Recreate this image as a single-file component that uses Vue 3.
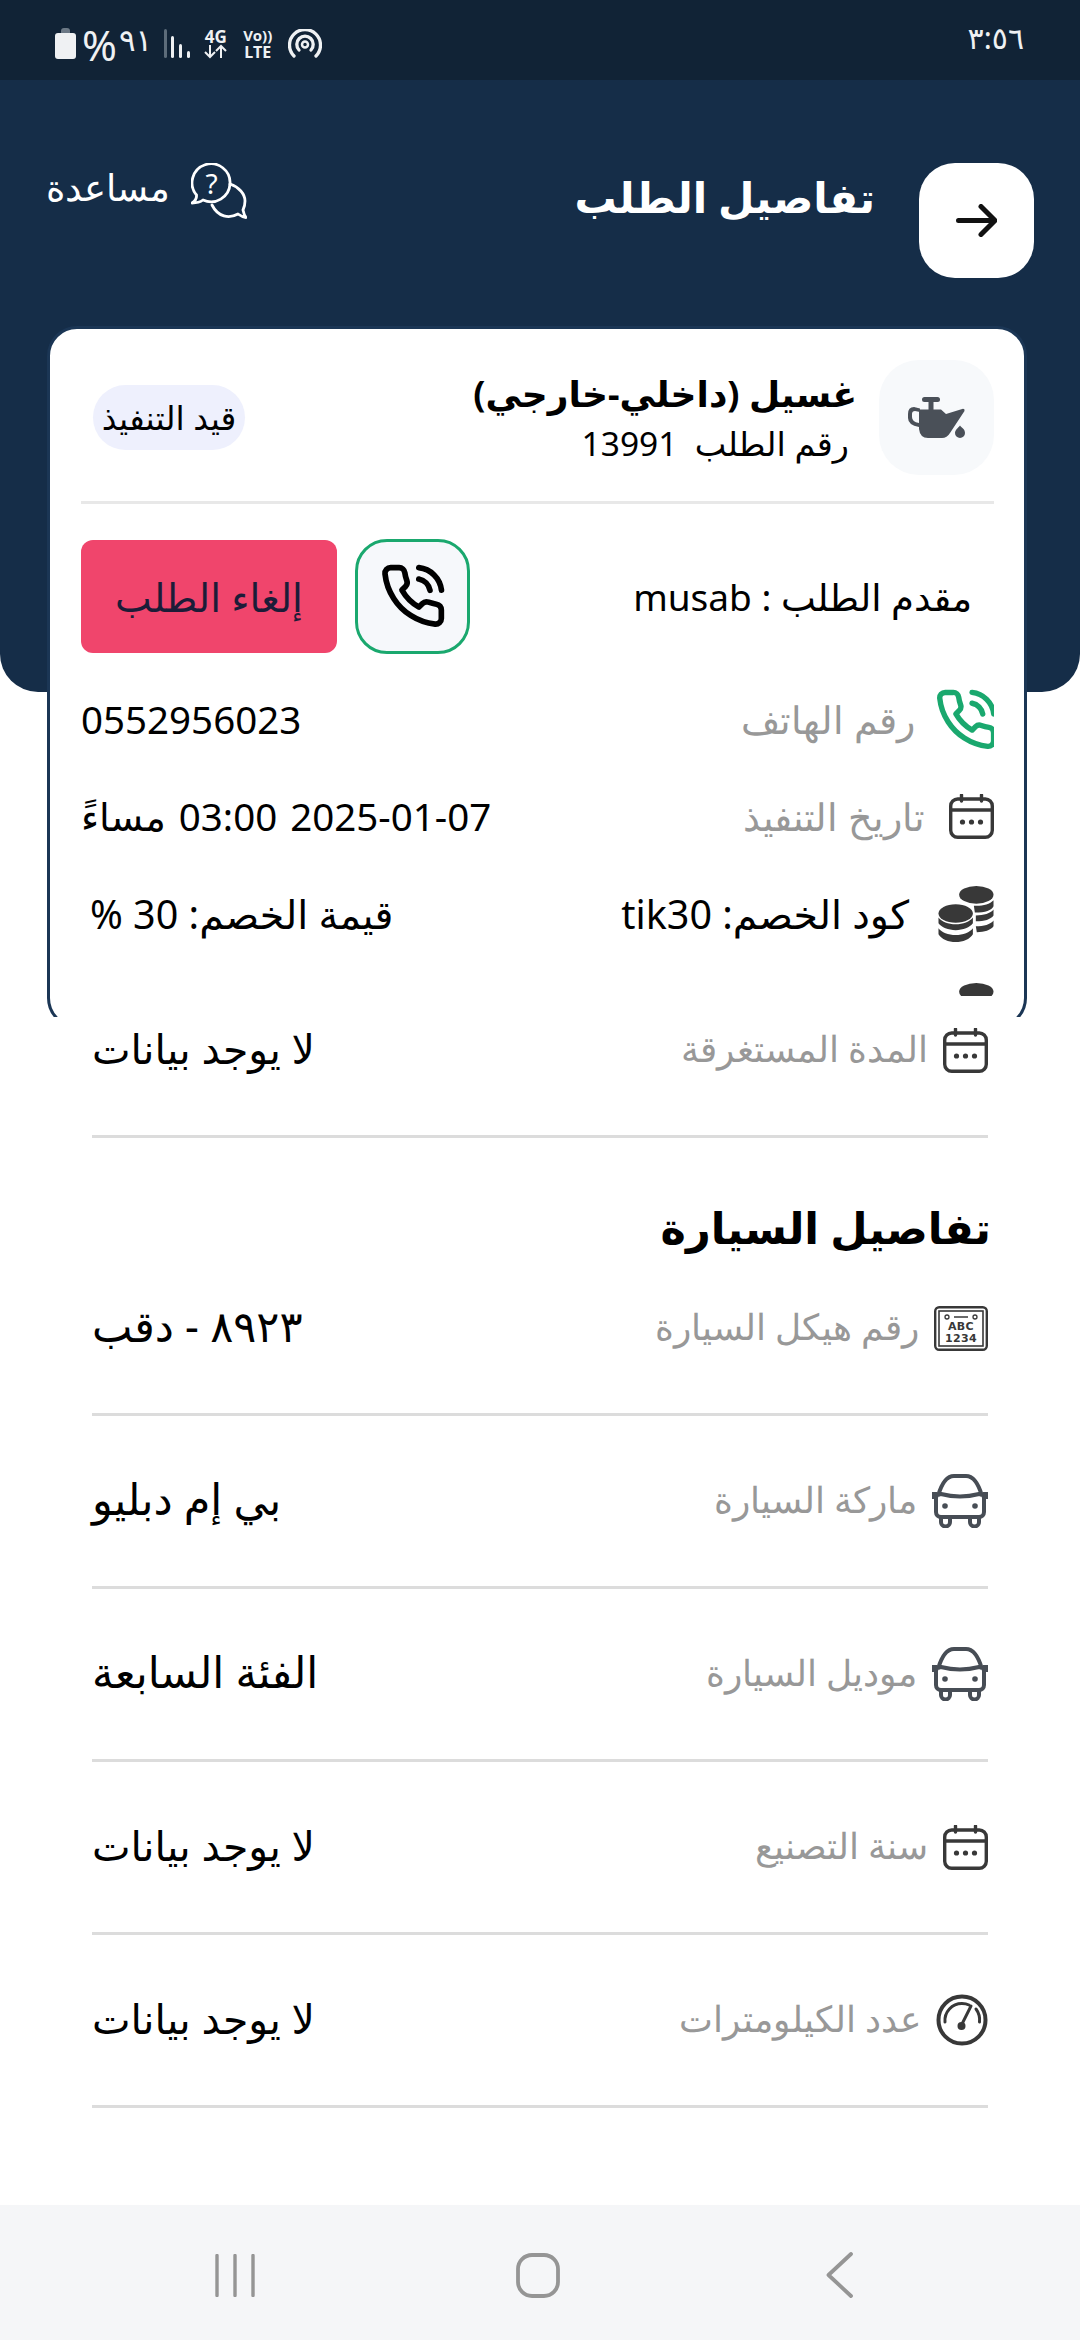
<script setup>
const cardRows = [
  { id: 'phone', icon: 'phone', label: 'رقم الهاتف', value: '0552956023' },
  { id: 'date', icon: 'cal', label: 'تاريخ التنفيذ', value: '2025-01-07 03:00 مساءً' }
]
const carRows = [
  { id: 'brand', icon: 'car', label: 'ماركة السيارة', value: 'بي إم دبليو', big: true },
  { id: 'model', icon: 'car', label: 'موديل السيارة', value: 'الفئة السابعة', big: true },
  { id: 'year', icon: 'cal', label: 'سنة التصنيع', value: 'لا يوجد بيانات' },
  { id: 'km', icon: 'gauge', label: 'عدد الكيلومترات', value: 'لا يوجد بيانات' }
]
</script>

<template>
  <div class="page" dir="rtl">
    <svg width="0" height="0" class="defs">
      <defs>
        <symbol id="i-phone" viewBox="0 0 24 24">
          <path fill="none" stroke="currentColor" stroke-width="2" stroke-linecap="round" stroke-linejoin="round" d="M22 16.92v3a2 2 0 0 1-2.18 2 19.79 19.79 0 0 1-8.63-3.07 19.5 19.5 0 0 1-6-6 19.79 19.79 0 0 1-3.07-8.67A2 2 0 0 1 4.11 2h3a2 2 0 0 1 2 1.72 12.84 12.84 0 0 0 .7 2.81 2 2 0 0 1-.45 2.11L8.09 9.91a16 16 0 0 0 6 6l1.27-1.27a2 2 0 0 1 2.11-.45 12.84 12.84 0 0 0 2.81.7A2 2 0 0 1 22 16.92z M14.05 2a9 9 0 0 1 8 7.94 M14.05 6A5 5 0 0 1 18 10"/>
        </symbol>
        <symbol id="i-cal" viewBox="0 0 45 45">
          <rect x="1.7" y="5" width="41.6" height="38.3" rx="7" fill="none" stroke="#383838" stroke-width="3.4"/>
          <path d="M2 16h41" stroke="#383838" stroke-width="3.4"/>
          <path d="M12.5 1v6M32.5 1v6" stroke="#383838" stroke-width="3.4" stroke-linecap="round"/>
          <circle cx="13.5" cy="28" r="2.6" fill="#383838"/><circle cx="22.5" cy="28" r="2.6" fill="#383838"/><circle cx="31.5" cy="28" r="2.6" fill="#383838"/>
        </symbol>
        <symbol id="i-coins" viewBox="0 0 56 57">
          <g fill="#383838">
            <ellipse cx="38.500" cy="9" rx="17.500" ry="9"/>
            <path d="M36 20c8 .5 16-1 20-5.500v6c-2 4-8 6.500-19 6.500z"/>
            <path d="M38 30c8 0 15-2 18-6v6c-3 4-9 6-18 6z"/>
            <path d="M38 41c8 0 15-2 18-6v6c-3 4-9 6-17 6z"/>
            <ellipse cx="17.500" cy="28" rx="17.500" ry="9.500"/>
            <path d="M0 32c3 4 10 7 17.500 7s14.500-3 17.500-7v6c-3 4-10 7-17.500 7S3 42 0 38z"/>
            <path d="M0 43c3 4 10 7 17.500 7s14.500-3 17.500-7v6c-3 5-10 8-17.500 8S3 54 0 49z"/>
          </g>
        </symbol>
        <symbol id="i-car" viewBox="0 0 56 54">
          <g fill="none" stroke="#474d55" stroke-width="4" stroke-linejoin="round">
            <path d="M6 22 C10 8 15 2 22 2 h12 c7 0 12 6 16 20"/>
            <path d="M4 24 c0-2 2-4 5-4 q19 5 38 0 c3 0 5 2 5 4 v14 c0 3-2 5-5 5 H9 c-3 0-5-2-5-5z"/>
            <path d="M9 44 v4 a4.500 4.500 0 0 0 9 0 v-4 M38 44 v4 a4.500 4.500 0 0 0 9 0 v-4"/>
          </g>
          <path d="M0 18h5v7H0zM51 18h5v7h-5z" fill="#474d55"/>
          <circle cx="13" cy="32" r="2.800" fill="#474d55"/><circle cx="43" cy="32" r="2.800" fill="#474d55"/>
        </symbol>
        <symbol id="i-gauge" viewBox="0 0 52 52">
          <circle cx="26" cy="26" r="23.500" fill="none" stroke="#383838" stroke-width="4"/>
          <path d="M9 28 A17 17 0 0 1 26 9.500 c3 0 5 .5 7 1.500 M40 15 c3 4 4 8 3.500 13" fill="none" stroke="#383838" stroke-width="3" stroke-linecap="round"/>
          <path d="M26 30 L35 12" stroke="#383838" stroke-width="3" stroke-linecap="round"/>
          <circle cx="25.500" cy="32" r="4" fill="#383838"/>
        </symbol>
      </defs>
    </svg>

    <header class="status">
      <span class="time">٣:٥٦</span>
      <div class="status-left" dir="ltr">
        <svg class="battery" width="21" height="31" viewBox="0 0 21 31">
          <path d="M6 3q0-3 3-3h3q3 0 3 3v2H6z" fill="#6c7986"/>
          <rect x="0" y="5" width="21" height="26" rx="3" fill="#eff1f3"/>
        </svg>
        <span class="pct">%</span>
        <span class="pct-num">٩١</span>
        <svg class="bars" width="26" height="30" viewBox="0 0 26 30">
          <rect x="0" y="0" width="3" height="29" rx="1.500" fill="#5d6c7a"/>
          <rect x="7" y="7" width="3" height="22" rx="1.500" fill="#eff1f3"/>
          <rect x="15" y="15" width="3" height="14" rx="1.500" fill="#eff1f3"/>
          <rect x="23" y="22" width="3" height="7" rx="1.500" fill="#eff1f3"/>
        </svg>
        <div class="net net-4g">
          <span>4G</span>
          <svg width="25" height="15" viewBox="0 0 25 15"><path d="M7 1v12M2 8l5 5 5-5M18 14V2M13 7l5-5 5 5" fill="none" stroke="#eff1f3" stroke-width="2"/></svg>
        </div>
        <div class="net net-volte"><span>Vo))</span><span>LTE</span></div>
        <svg class="hotspot" width="34" height="29" viewBox="0 0 34 29">
          <g fill="none" stroke="#eff1f3" stroke-width="3.300" stroke-linecap="round">
            <path d="M6 27A15.500 15.500 0 1 1 28 27"/>
            <path d="M11 21A8.200 8.200 0 1 1 23 21"/>
          </g>
          <circle cx="17" cy="15.500" r="3" fill="none" stroke="#eff1f3" stroke-width="2.500"/>
        </svg>
      </div>
    </header>

    <section class="hero">
      <button class="back" type="button" aria-label="رجوع">
        <svg width="41" height="33" viewBox="0 0 41 33"><path d="M2.500 16.500H38M25 2.500l14 14-14 14" fill="none" stroke="#111" stroke-width="5" stroke-linecap="round" stroke-linejoin="round"/></svg>
      </button>
      <h1 class="title">تفاصيل الطلب</h1>
      <div class="help">
        <svg width="56" height="56" viewBox="0 0 56 56">
          <g fill="none" stroke="#fff" stroke-width="2.800" stroke-linejoin="round" stroke-linecap="round">
            <path d="M5.500 32 Q6 37 1 40 Q8 40 12 37 A19 19 0 1 0 5.500 32Z"/>
            <path d="M39 21 C48 24 54 31 54 38 C54 42 53 45 52 47 Q53 52 55 54.500 Q51 54 47 51 C38 56 27 54 21 42"/>
          </g>
          <text x="20.500" y="31" class="help-q">?</text>
        </svg>
        <span class="help-text">مساعدة</span>
      </div>
    </section>

    <div class="card-clip">
      <article class="card">
        <div class="card-head">
          <div class="tile">
            <svg width="57" height="41" viewBox="0 0 57 41">
              <g fill="#4a5058">
                <rect x="14" y="0" width="18" height="5" rx="2.500"/>
                <rect x="20.500" y="4" width="5" height="10"/>
                <path d="M11 12.500 H33 L38 17 L55 11.800 Q57 11.800 56.500 14 L42 36 Q39 41 34 41 H20 Q12 41 11 32z"/>
                <path fill-rule="evenodd" d="M12 11.500 L6 10 Q0 10 0 17 V21 Q0 28 11 30 V26 Q4 25 4 20 V17 Q4 14 7 14 L12 15z"/>
                <path d="M52 28.500 C54 31 57 32 57 36 a5 5 0 0 1-10 0 c0-3 3-5 5-7.500z"/>
              </g>
            </svg>
          </div>
          <div class="head-text">
            <div class="svc">غسيل (داخلي-خارجي)</div>
            <div class="order">رقم الطلب&nbsp; 13991</div>
          </div>
          <span class="badge">قيد التنفيذ</span>
        </div>
        <div class="rule"></div>
        <div class="sender-row">
          <span class="sender">مقدم الطلب : musab</span>
          <div class="actions">
            <button class="call" type="button" aria-label="اتصال">
              <svg width="68" height="68" class="ico-black"><use href="#i-phone"/></svg>
            </button>
            <button class="cancel" type="button">إلغاء الطلب</button>
          </div>
        </div>
        <div class="list">
          <div v-for="r in cardRows" :key="r.id" class="c-row">
            <div class="lab">
              <svg v-if="r.icon === 'phone'" class="ico-tel ico-green"><use href="#i-phone"/></svg>
              <svg v-else class="ico-45"><use href="#i-cal"/></svg>
              <span class="muted">{{ r.label }}</span>
            </div>
            <span class="val-en">{{ r.value }}</span>
          </div>
          <div class="c-row">
            <div class="lab lab-wide">
              <svg class="ico-56"><use href="#i-coins"/></svg>
              <span class="val-mid">كود الخصم: tik30</span>
            </div>
            <span class="val-mid discount">قيمة الخصم: 30 %</span>
          </div>
          <div class="c-row">
            <div class="lab"><svg class="ico-56"><use href="#i-coins"/></svg></div>
          </div>
        </div>
      </article>
    </div>

    <main class="details">
      <div class="d-row first">
        <div class="lab">
          <svg class="ico-45"><use href="#i-cal"/></svg>
          <span class="muted">المدة المستغرقة</span>
        </div>
        <span class="val">لا يوجد بيانات</span>
      </div>
      <h2 class="car-title">تفاصيل السيارة</h2>
      <div class="d-row">
        <div class="lab">
          <svg class="ico-plate" viewBox="0 0 54 45">
            <rect x="1.200" y="1.200" width="51.600" height="42.600" rx="4" fill="none" stroke="#383838" stroke-width="2.400"/>
            <rect x="5" y="5" width="44" height="35" fill="none" stroke="#383838" stroke-width="1.600"/>
            <circle cx="13" cy="11" r="2" fill="none" stroke="#383838" stroke-width="1.300"/>
            <circle cx="41" cy="11" r="2" fill="none" stroke="#383838" stroke-width="1.300"/>
            <path d="M20 11h14" stroke="#383838" stroke-width="1.500"/>
            <text x="27" y="24" class="plate-t">ABC</text>
            <text x="27" y="36" class="plate-t">1234</text>
          </svg>
          <span class="muted">رقم هيكل السيارة</span>
        </div>
        <span class="val big">٨٩٢٣ - دقب</span>
      </div>
      <div v-for="r in carRows" :key="r.id" class="d-row">
        <div class="lab">
          <svg v-if="r.icon === 'car'" class="ico-car"><use href="#i-car"/></svg>
          <svg v-else-if="r.icon === 'cal'" class="ico-45"><use href="#i-cal"/></svg>
          <svg v-else class="ico-gauge"><use href="#i-gauge"/></svg>
          <span class="muted">{{ r.label }}</span>
        </div>
        <span class="val" :class="{ big: r.big }">{{ r.value }}</span>
      </div>
    </main>

    <nav class="navbar" dir="ltr">
      <svg width="40" height="43" viewBox="0 0 40 43"><path d="M2 1.500v40M20 1.500v40M38 1.500v40" stroke="#959595" stroke-width="3.400" stroke-linecap="round"/></svg>
      <svg class="nav-home" width="44" height="45" viewBox="0 0 44 45"><rect x="2" y="2" width="40" height="41" rx="14" fill="none" stroke="#959595" stroke-width="3.800"/></svg>
      <svg width="27" height="46" viewBox="0 0 27 46"><path d="M25 2 L2.500 23 L25 44" fill="none" stroke="#959595" stroke-width="3.800" stroke-linecap="round" stroke-linejoin="round"/></svg>
    </nav>
  </div>
</template>

<style>
html, body { margin: 0; background: #fff; }
</style>

<style scoped>
.page {
  width: 1080px;
  height: 2340px;
  display: flex;
  flex-direction: column;
  overflow: hidden;
  background: #fff;
  color: #000;
  font-family: "Noto Sans", "DejaVu Sans", sans-serif;
}
.defs { position: absolute; }
.status {
  height: 80px;
  flex: none;
  background: #112336;
  display: flex;
  align-items: center;
  justify-content: space-between;
  padding: 0 56px 0 55px;
  box-sizing: border-box;
  color: #eff1f3;
}
.time { font-size: 30px; line-height: 1; margin-bottom: 4px; }
.status-left { display: flex; align-items: center; height: 80px; }
.battery { margin-top: 7px; }
.pct { font-size: 42px; margin-left: 6px; line-height: 1; margin-top: 9px; }
.pct-num { font-size: 31px; margin-left: 2px; line-height: 1; margin-top: -2px; }
.bars { margin-left: 12px; margin-top: 7px; }
.net { display: flex; flex-direction: column; align-items: center; font-weight: 700; font-size: 15px; line-height: 17px; margin-top: 7px; }
.net-4g { margin-left: 13px; font-size: 17px; }
.net-4g svg { margin-top: -1px; }
.net-volte { margin-left: 15px; }
.net-volte span:last-child { font-size: 16px; }
.hotspot { margin-left: 16px; margin-top: 7px; }

.hero {
  flex: none;
  height: 612px;
  box-sizing: border-box;
  background: #152d48;
  border-radius: 0 0 38px 38px;
  padding: 83px 46px 0 46px;
  display: flex;
  align-items: flex-start;
  color: #fff;
}
.back {
  width: 115px;
  height: 115px;
  flex: none;
  border: 0;
  padding: 0;
  background: #fff;
  border-radius: 36px;
  display: flex;
  align-items: center;
  justify-content: center;
}
.title { margin: 0 44px 0 0; font-size: 42px; font-weight: 700; line-height: 68px; }
.help { margin-right: auto; display: flex; align-items: center; gap: 21px; height: 56px; }
.help-text { font-size: 37px; font-weight: 300; line-height: 1; margin-bottom: 10px; }
.help-q { font: 400 28px "Noto Sans", sans-serif; fill: #fff; text-anchor: middle; }

.card-clip {
  flex: none;
  margin: -366px 53px 0 47px;
  height: 691px;
  overflow: hidden;
  position: relative;
}
.card {
  height: 702px;
  box-sizing: border-box;
  background: #fff;
  border: 3px solid #1b3655;
  border-radius: 30px;
  padding: 31px 30px 0 31px;
}
.card-head { display: flex; align-items: center; height: 115px; }
.tile {
  width: 115px;
  height: 115px;
  flex: none;
  background: #f7f9fb;
  border-radius: 40px;
  display: flex;
  align-items: center;
  justify-content: center;
}
.head-text { margin-right: 22px; }
.svc { font-size: 36px; font-weight: 700; line-height: 50px; }
.order { font-size: 33.5px; line-height: 48px; margin-right: 8px; }
.badge {
  margin-right: auto;
  margin-left: 12px;
  width: 152px;
  height: 65px;
  border-radius: 33px;
  background: #eef0fd;
  font-size: 33px;
  display: flex;
  align-items: center;
  justify-content: center;
  white-space: nowrap;
}
.rule { height: 3px; background: #e8e8e8; margin-top: 26px; }
.sender-row { display: flex; align-items: center; justify-content: space-between; height: 116px; margin-top: 34px; padding-right: 22px; }
.sender { font-size: 37px; }
.actions { display: flex; align-items: center; gap: 18px; }
.call {
  width: 115px;
  height: 115px;
  box-sizing: border-box;
  border: 3px solid #1aa86e;
  border-radius: 32px;
  background: #f6f8fb;
  padding: 0;
  display: flex;
  align-items: center;
  justify-content: center;
}
.ico-black { color: #000; }
.ico-green { color: #1aa86e; }
.cancel {
  width: 256px;
  height: 113px;
  border: 0;
  border-radius: 12px;
  background: #f0456c;
  color: #1c1c38;
  font: 400 39px "Noto Sans", "DejaVu Sans", sans-serif;
  padding: 0;
}
.list { height: 326px; margin-top: 16px; overflow: hidden; }
.c-row { height: 97.5px; display: flex; align-items: center; justify-content: space-between; }
.lab { display: flex; align-items: center; gap: 24px; }
.lab-wide { gap: 29px; }
.details .lab { gap: 15px; }
.muted { color: #989898; font-size: 38px; font-weight: 300; }
.details .muted { font-size: 35.5px; margin-bottom: 5px; }
.val { font-size: 41px; color: #000; margin-bottom: 5px; }
.val.big { font-size: 43px; }
.val-en { font-size: 38.500px; color: #000; word-spacing: 3px; }
.val-mid { font-size: 39.5px; color: #000; }
.discount { margin-left: 9px; }
.ico-56 { width: 56px; height: 56px; flex: none; }
.ico-tel { width: 65px; height: 65px; margin: -3px -5px -5px -5px; flex: none; }
.ico-45 { width: 45px; height: 45px; flex: none; }
.ico-car { width: 56px; height: 54px; flex: none; }
.ico-gauge { width: 52px; height: 52px; flex: none; }
.ico-plate { width: 54px; height: 45px; flex: none; }
.plate-t { font: 700 11px "DejaVu Sans", sans-serif; fill: #383838; text-anchor: middle; letter-spacing: .4px; }

.details { flex: 1; position: relative; background: #fff; padding: 0 92px; }
.d-row {
  height: 170px;
  border-bottom: 3px solid #dcdcdc;
  display: flex;
  align-items: center;
  justify-content: space-between;
}
.d-row.first { height: 66px; padding-bottom: 52px; }
.car-title { margin: 0 -3px 0 0; height: 105px; box-sizing: border-box; padding-top: 60px; font-size: 43px; font-weight: 700; line-height: 60px; }
.navbar {
  height: 135px;
  flex: none;
  background: #f5f6f8;
  display: flex;
  align-items: center;
  justify-content: space-between;
  padding: 5px 227px 0 215px;
  box-sizing: border-box;
}
.nav-home { margin-right: 6px; }
</style>
